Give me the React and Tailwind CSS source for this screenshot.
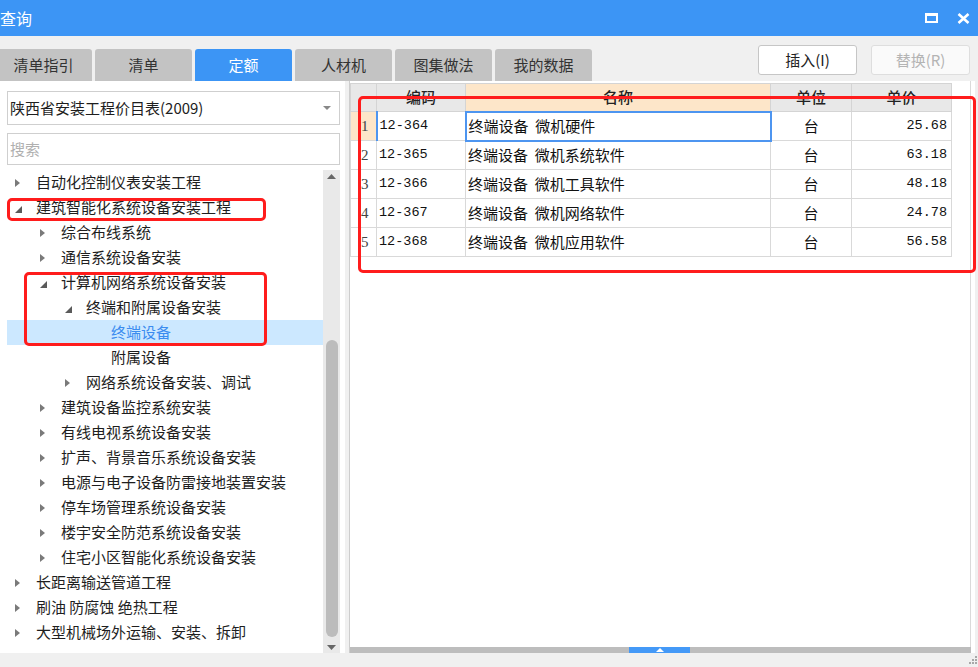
import React from 'react';

const tabs = ['清单指引', '清单', '定额', '人材机', '图集做法', '我的数据'];

const tree = [
    { t: '自动化控制仪表安装工程', l: 0, s: 'c' },
    { t: '建筑智能化系统设备安装工程', l: 0, s: 'e' },
    { t: '综合布线系统', l: 1, s: 'c' },
    { t: '通信系统设备安装', l: 1, s: 'c' },
    { t: '计算机网络系统设备安装', l: 1, s: 'e' },
    { t: '终端和附属设备安装', l: 2, s: 'e' },
    { t: '终端设备', l: 3, s: 'n', sel: true },
    { t: '附属设备', l: 3, s: 'n' },
    { t: '网络系统设备安装、调试', l: 2, s: 'c' },
    { t: '建筑设备监控系统安装', l: 1, s: 'c' },
    { t: '有线电视系统设备安装', l: 1, s: 'c' },
    { t: '扩声、背景音乐系统设备安装', l: 1, s: 'c' },
    { t: '电源与电子设备防雷接地装置安装', l: 1, s: 'c' },
    { t: '停车场管理系统设备安装', l: 1, s: 'c' },
    { t: '楼宇安全防范系统设备安装', l: 1, s: 'c' },
    { t: '住宅小区智能化系统设备安装', l: 1, s: 'c' },
    { t: '长距离输送管道工程', l: 0, s: 'c' },
    { t: '刷油 防腐蚀 绝热工程', l: 0, s: 'c' },
    { t: '大型机械场外运输、安装、拆卸', l: 0, s: 'c' },
];

const rows = [
    ['12-364', '微机硬件', '25.68'],
    ['12-365', '微机系统软件', '63.18'],
    ['12-366', '微机工具软件', '48.18'],
    ['12-367', '微机网络软件', '24.78'],
    ['12-368', '微机应用软件', '56.58'],
];

const indent = ['pl-0', 'pl-[25px]', 'pl-[50px]', 'pl-[75px]'];

function Arrow({ s }) {
    if (s === 'c') {
        return (
            <svg width="5" height="8" viewBox="0 0 5 8" className="ml-[8px]">
                <polygon points="0,0 5,4 0,8" fill="#7a7a7a" />
            </svg>
        );
    }
    if (s === 'e') {
        return (
            <svg width="7" height="7" viewBox="0 0 7 7" className="ml-[8px] mt-[3px]">
                <polygon points="7,0 7,7 0,7" fill="#5a5a5a" />
            </svg>
        );
    }
    return null;
}

function TreeRow({ item }) {
    return (
        <div className={`flex items-center h-[25px] ${indent[item.l]} ${item.sel ? 'bg-[#cce8ff]' : ''}`}>
            <div className="w-[29px] flex items-center shrink-0">
                <Arrow s={item.s} />
            </div>
            <span className={`whitespace-pre text-[15px] ${item.sel ? 'text-[#3b8cf0]' : 'text-[#1e1e1e]'}`}>{item.t}</span>
        </div>
    );
}

export default function App() {
    return (
        <div
            className="relative w-[978px] h-[667px] overflow-hidden bg-[#f0f0f0] flex flex-col"
            style={{ fontFamily: '"Noto Sans CJK SC", "Noto Sans", sans-serif' }}
        >
            {/* Title bar */}
            <div className="h-[36px] bg-[#3c95f5] flex items-center justify-between shrink-0">
                <span className="text-white text-[16px] leading-none">查询</span>
                <div className="flex items-center gap-[19px] pr-[8px]">
                    <div className="w-[13px] h-[10px] border-2 border-t-[3px] border-white" />
                    <svg width="13" height="11" viewBox="0 0 13 11">
                        <path d="M1.5 1 L11.5 10 M11.5 1 L1.5 10" stroke="white" strokeWidth="2.6" />
                    </svg>
                </div>
            </div>

            {/* Tabs + buttons */}
            <div className="h-[45px] flex justify-between shrink-0">
                <div className="flex gap-[3px] ml-[-5px] mt-[13px]">
                    {tabs.map((t) => (
                        <div
                            key={t}
                            className={`w-[97px] h-[32px] rounded-t-[3px] flex items-center justify-center text-[15px] ${
                                t === '定额' ? 'bg-[#3c95f5] text-white' : 'bg-[#c3c3c3] text-[#333]'
                            }`}
                        >
                            {t}
                        </div>
                    ))}
                </div>
                <div className="flex gap-[14px] mt-[9px] pr-[8px]">
                    <div className="w-[99px] h-[30px] bg-white border border-[#c6c6c6] rounded-[3px] flex items-center justify-center text-[15px] text-[#222]">
                        插入(I)
                    </div>
                    <div className="w-[99px] h-[30px] bg-[#fafafa] border border-[#dedede] rounded-[3px] flex items-center justify-center text-[15px] text-[#b4b4b4]">
                        替换(R)
                    </div>
                </div>
            </div>

            {/* Main */}
            <div className="flex h-[572px] shrink-0">
                {/* Left panel */}
                <div className="w-[345px] bg-white flex flex-col pl-[7px] pr-[5px] pt-[10px]">
                    <div className="h-[34px] border border-[#cfcfcf] flex items-center justify-between pl-[2px] pr-[8px] shrink-0">
                        <span className="text-[15px] text-[#1e1e1e]">陕西省安装工程价目表(2009)</span>
                        <svg width="8" height="4" viewBox="0 0 8 4">
                            <polygon points="0,0 8,0 4,4" fill="#888" />
                        </svg>
                    </div>
                    <div className="h-[32px] mt-[8px] border border-[#cfcfcf] flex items-center pl-[2px] shrink-0">
                        <span className="text-[15px] text-[#b0b0b0]">搜索</span>
                    </div>
                    <div className="flex flex-1 mt-[5px] min-h-0">
                        <div className="flex-1">
                            {tree.map((item) => (
                                <TreeRow key={item.t} item={item} />
                            ))}
                        </div>
                        <div className="w-[17px] bg-[#e9e9e9] flex flex-col items-center">
                            <div className="h-[12px] flex items-center justify-center">
                                <svg width="9" height="5" viewBox="0 0 9 5">
                                    <polygon points="0,5 9,5 4.5,0" fill="#666" />
                                </svg>
                            </div>
                            <div className="flex-1 w-full flex flex-col items-center pt-[158px] pb-[4px]">
                                <div className="w-[12px] flex-1 rounded-full bg-[#bcbcbc]" />
                            </div>
                            <div className="h-[12px] flex items-center justify-center">
                                <svg width="9" height="5" viewBox="0 0 9 5">
                                    <polygon points="0,0 9,0 4.5,5" fill="#666" />
                                </svg>
                            </div>
                        </div>
                    </div>
                </div>

                {/* Right panel */}
                <div className="ml-[4px] w-[626px] bg-white border-l border-[#cdcdcd] flex flex-col">
                    <div className="flex-1 flex">
                        <div className="w-[621px] border-r border-[#dadada] pt-[2px]">
                            <table
                                className="border-collapse text-[15px] text-[#111] table-fixed"
                                style={{ width: 601 }}
                            >
                                <colgroup>
                                    <col style={{ width: 26 }} />
                                    <col style={{ width: 89 }} />
                                    <col style={{ width: 305 }} />
                                    <col style={{ width: 81 }} />
                                    <col style={{ width: 100 }} />
                                </colgroup>
                                <thead>
                                    <tr className="h-[28px]">
                                        <th className="border border-[#d4d4d4] bg-[#e8e8e8]" />
                                        <th className="border border-[#d4d4d4] bg-[#e8e8e8] font-medium text-[#222]">编码</th>
                                        <th className="border border-[#d4d4d4] bg-[#fde6c9] font-medium text-[#222]">名称</th>
                                        <th className="border border-[#d4d4d4] bg-[#e8e8e8] font-medium text-[#222]">单位</th>
                                        <th className="border border-[#d4d4d4] bg-[#e8e8e8] font-medium text-[#222]">单价</th>
                                    </tr>
                                </thead>
                                <tbody>
                                    {rows.map((r, i) => (
                                        <tr key={r[0]} className="h-[29px]">
                                            <td
                                                className={`border border-[#d9d9d9] pl-[10px] text-[15px] text-[#444] ${i === 0 ? 'bg-[#fde6c9]' : ''}`}
                                                style={{ fontFamily: '"Liberation Serif", serif' }}
                                            >
                                                {i + 1}
                                            </td>
                                            <td
                                                className={`border border-[#d9d9d9] pl-[2px] text-[13.5px] ${i === 0 ? 'border-l-2 border-l-[#4d95f0]' : ''}`}
                                                style={{ fontFamily: '"Liberation Mono", monospace' }}
                                            >
                                                {r[0]}
                                            </td>
                                            <td
                                                className={`pl-[2px] whitespace-pre ${
                                                    i === 0 ? 'border-2 border-[#4d95f0]' : 'border border-[#d9d9d9]'
                                                }`}
                                            >
                                                {'终端设备  ' + r[1]}
                                            </td>
                                            <td className="border border-[#d9d9d9] text-center">台</td>
                                            <td
                                                className="border border-[#d9d9d9] text-right pr-[4px] text-[13.5px]"
                                                style={{ fontFamily: '"Liberation Mono", monospace' }}
                                            >
                                                {r[2]}
                                            </td>
                                        </tr>
                                    ))}
                                </tbody>
                            </table>
                        </div>
                    </div>
                    <div className="h-[6px] w-[621px] bg-[#bdbdbd] flex">
                        <div className="ml-[279px] w-[61px] h-full bg-[#4499f7] flex items-center justify-center">
                            <svg width="8" height="4" viewBox="0 0 8 4">
                                <polygon points="0,4 8,4 4,0" fill="white" />
                            </svg>
                        </div>
                    </div>
                </div>
            </div>

            {/* resize grip */}
            <div className="absolute right-[1px] bottom-[3px] grid grid-cols-3 gap-[1px]">
                <div className="w-[2px] h-[2px]" />
                <div className="w-[2px] h-[2px]" />
                <div className="w-[2px] h-[2px] bg-[#a8a8a8]" />
                <div className="w-[2px] h-[2px]" />
                <div className="w-[2px] h-[2px] bg-[#a8a8a8]" />
                <div className="w-[2px] h-[2px] bg-[#a8a8a8]" />
                <div className="w-[2px] h-[2px] bg-[#a8a8a8]" />
                <div className="w-[2px] h-[2px] bg-[#a8a8a8]" />
                <div className="w-[2px] h-[2px] bg-[#a8a8a8]" />
            </div>

            {/* red annotation boxes */}
            <div className="absolute left-[7px] top-[198px] w-[259px] h-[23px] border-[3px] border-[#ff1c1c] rounded-[5px]" />
            <div className="absolute left-[24px] top-[272px] w-[243px] h-[74px] border-[3px] border-[#ff1c1c] rounded-[5px]" />
            <div className="absolute left-[358px] top-[96px] w-[618px] h-[177px] border-[3px] border-[#ff1c1c] rounded-[5px]" />
        </div>
    );
}
